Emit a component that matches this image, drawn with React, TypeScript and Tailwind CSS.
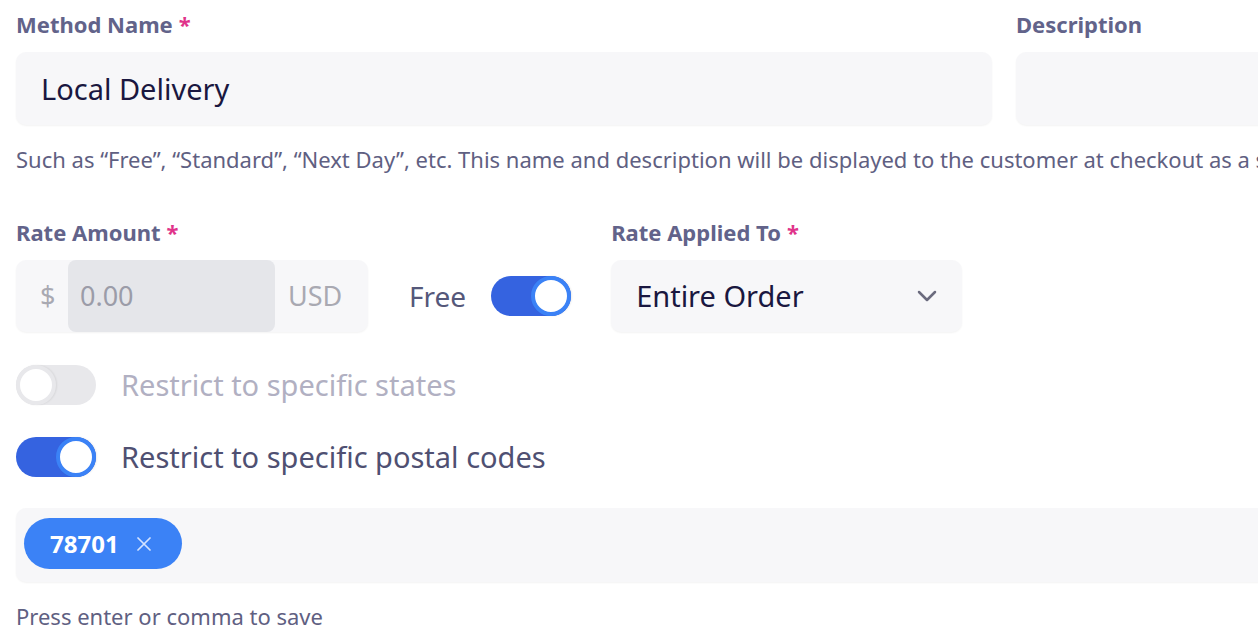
const Label = ({ text, required }: { text: string; required?: boolean }) => (
  <div className="text-[22px] font-bold leading-none text-[#62638a]">
    {text}
    {required && <span className="ml-1.5 text-[#e0338a]">*</span>}
  </div>
);

const Toggle = ({ on }: { on: boolean }) => (
  <div
    className={`flex h-10 w-20 shrink-0 items-center rounded-full ${
      on ? "justify-end bg-[#3563e0]" : "justify-start bg-[#e8e8eb]"
    }`}
  >
    <div
      className={`h-10 w-10 rounded-full border-4 bg-white shadow-[1px_0_2px_rgba(0,0,0,0.08)] ${
        on ? "border-[#3b82f6]" : "border-[#e8e8eb]"
      }`}
    />
  </div>
);

export default function App() {
  return (
    <div
      className="h-[644px] w-[1258px] overflow-hidden bg-white"
      style={{ fontFamily: '"Noto Sans", "Open Sans", sans-serif' }}
    >
      <div className="flex w-[1600px] flex-col pl-4 pt-[13px]">
        {/* name + description */}
        <div className="flex gap-6">
          <div className="flex w-[976px] flex-col gap-[17px]">
            <Label text="Method Name" required />
            <div className="flex h-[73px] items-center rounded-[10px] bg-[#f7f7f9] px-[25px] text-[29px] text-[#1a1740] shadow-[0_1px_2px_rgba(0,0,0,0.05)]">
              Local Delivery
            </div>
          </div>
          <div className="flex w-[480px] flex-col gap-[17px]">
            <Label text="Description" />
            <div className="h-[73px] rounded-[10px] bg-[#f7f7f9] shadow-[0_1px_2px_rgba(0,0,0,0.05)]" />
          </div>
        </div>

        <p className="mt-[18px] whitespace-nowrap text-[22px] text-[#5f6082]">
          Such as “Free”, “Standard”, “Next Day”, etc. This name and description will be displayed to the customer at checkout as a shipping option.
        </p>

        {/* rate row */}
        <div className="mt-[45px] flex items-end">
          <div className="flex flex-col gap-[17px]">
            <Label text="Rate Amount" required />
            <div className="flex h-[72px] w-[352px] items-center rounded-[10px] bg-[#f7f7f9] shadow-[0_1px_2px_rgba(0,0,0,0.05)]">
              <span className="w-[52px] pl-6 text-[27px] text-[#a9a9b2]">$</span>
              <div className="flex h-full w-[207px] items-center rounded-[8px] bg-[#e5e6ea] px-3 text-[27px] text-[#9b9ca8]">
                0.00
              </div>
              <span className="pl-[13px] text-[27px] text-[#a9a9b2]">USD</span>
            </div>
          </div>
          <div className="ml-[41px] flex h-[72px] items-center gap-[25px]">
            <span className="text-[28px] text-[#55587a]">Free</span>
            <Toggle on />
          </div>
          <div className="ml-10 flex flex-col gap-[17px]">
            <Label text="Rate Applied To" required />
            <div className="flex h-[72px] w-[351px] items-center justify-between rounded-[10px] bg-[#f7f7f9] pl-[25px] pr-[25px] text-[29px] text-[#1a1740] shadow-[0_1px_2px_rgba(0,0,0,0.05)]">
              Entire Order
              <svg width="20" height="12" viewBox="0 0 20 12" fill="none">
                <polyline
                  points="2,2 10,10 18,2"
                  stroke="#6b6b7e"
                  strokeWidth="2.5"
                  strokeLinecap="round"
                  strokeLinejoin="round"
                />
              </svg>
            </div>
          </div>
        </div>

        {/* toggles */}
        <div className="mt-[33px] flex flex-col gap-8">
          <div className="flex items-center gap-[25px]">
            <Toggle on={false} />
            <span className="-mt-0.5 text-[29px] leading-none text-[#b1b0c2]">Restrict to specific states</span>
          </div>
          <div className="flex items-center gap-[25px]">
            <Toggle on />
            <span className="-mt-0.5 text-[29px] leading-none text-[#4f5072]">Restrict to specific postal codes</span>
          </div>
        </div>

        {/* postal codes */}
        <div className="mt-[31px] flex h-[74px] w-[1400px] items-center rounded-[10px] bg-[#f7f7f9] px-2 pb-[3px] shadow-[0_1px_2px_rgba(0,0,0,0.05)]">
          <div className="flex h-[51px] items-center gap-[18px] rounded-full bg-[#3b82f6] pl-[26px] pr-[31px]">
            <span className="text-[24px] font-bold text-white">78701</span>
            <svg width="14" height="14" viewBox="0 0 14 14" fill="none">
              <path d="M1 1L13 13M13 1L1 13" stroke="#d4e3ff" strokeWidth="1.75" strokeLinecap="round" />
            </svg>
          </div>
        </div>

        <p className="mt-[18px] text-[22px] text-[#5f6082]">Press enter or comma to save</p>
      </div>
    </div>
  );
}
